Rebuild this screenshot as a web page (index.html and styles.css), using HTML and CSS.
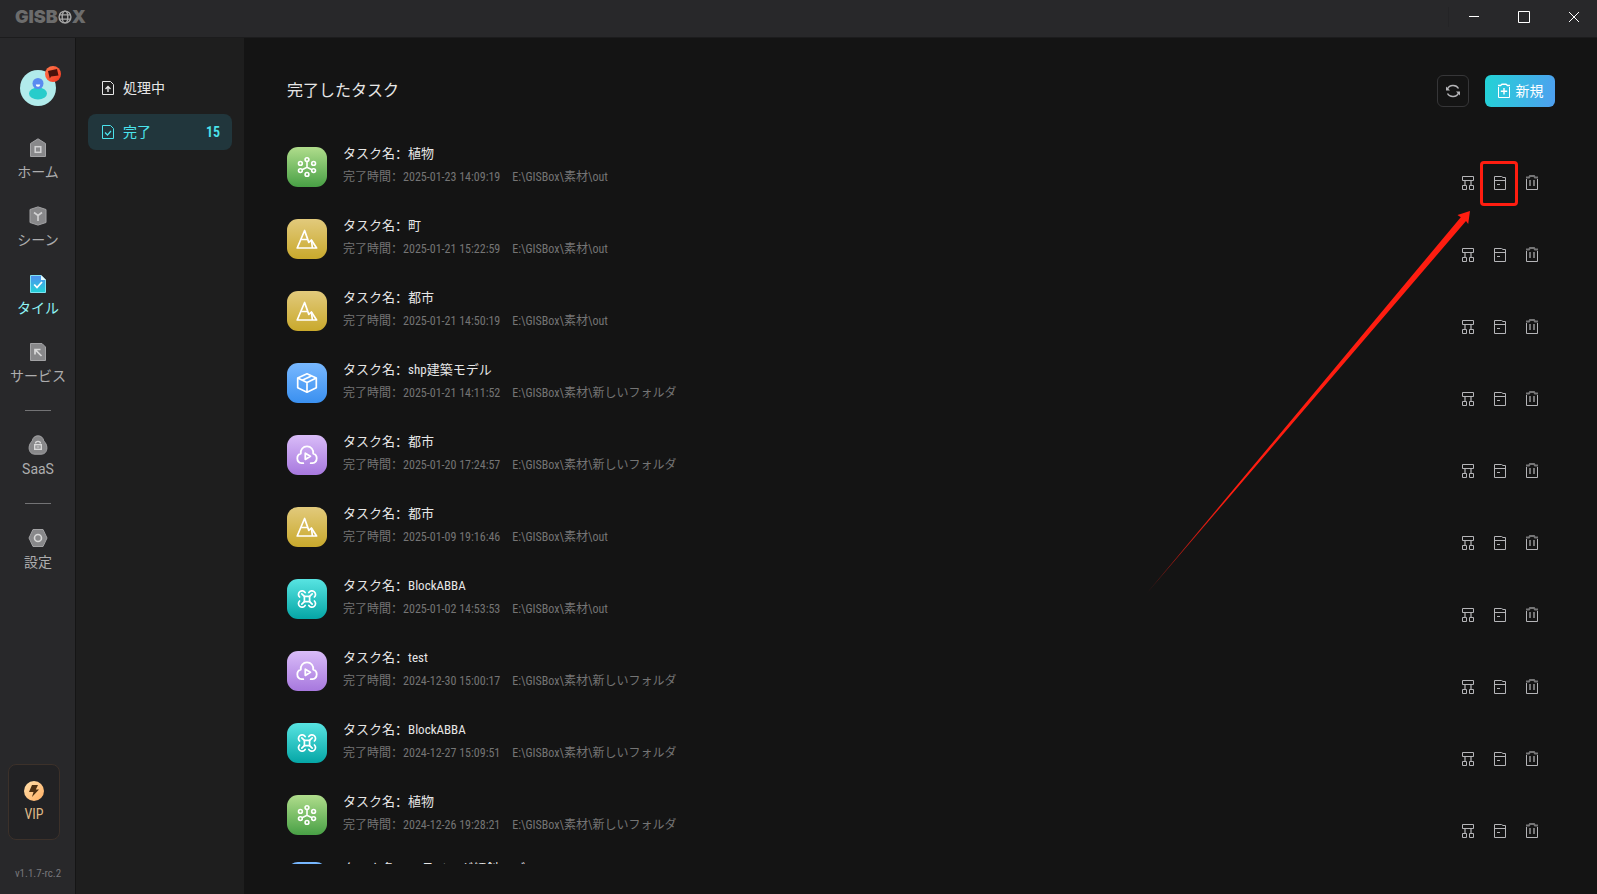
FILE: index.html
```html
<!DOCTYPE html>
<html lang="ja">
<head>
<meta charset="utf-8">
<title>GISBox</title>
<link rel="stylesheet" href="styles.css">
</head>
<body>
<svg class="defs" width="0" height="0" aria-hidden="true">
  <defs>
    <linearGradient id="g-tile" x1="0" y1="0" x2="0" y2="1"><stop offset="0" stop-color="#4f8ff0"/><stop offset="1" stop-color="#22d3d6"/></linearGradient>
    <linearGradient id="g-vip" x1="0" y1="0" x2="1" y2="1"><stop offset="0" stop-color="#ffe0ac"/><stop offset="1" stop-color="#ffae62"/></linearGradient>
    <linearGradient id="g-flag" x1="0" y1="0" x2="1" y2="1"><stop offset="0" stop-color="#ff7a4d"/><stop offset="1" stop-color="#f5351f"/></linearGradient>
    <linearGradient id="g-arrow" gradientUnits="userSpaceOnUse" x1="8" y1="432" x2="90" y2="334"><stop offset="0" stop-color="#ff1d10" stop-opacity=".5"/><stop offset="1" stop-color="#ff1d10"/></linearGradient>
  </defs>
  <symbol id="i-plant" viewBox="0 0 40 40">
    <g fill="none" stroke="#fff" stroke-width="1.6"><circle cx="20" cy="12.6" r="1.9"/><circle cx="13.4" cy="16.4" r="1.9"/><circle cx="26.6" cy="16.4" r="1.9"/><circle cx="13.4" cy="23.6" r="1.9"/><circle cx="26.6" cy="23.6" r="1.9"/><circle cx="20" cy="27.4" r="1.9"/><path d="M20 14.5V20.3M15 22.7L20 20.3L25 22.7"/></g>
  </symbol>
  <symbol id="i-mountain" viewBox="0 0 40 40">
    <g fill="none" stroke="#fff" stroke-width="1.7" stroke-linejoin="round"><path d="M17.6 11.5L10.2 29H29.6L24.4 21L21.8 23.4Z"/><path d="M14.2 20.5H21M24.4 21L25.4 29"/></g>
  </symbol>
  <symbol id="i-box" viewBox="0 0 40 40">
    <g fill="none" stroke="#fff" stroke-width="1.7" stroke-linejoin="round"><path d="M20 10.8L29.3 15V24.8L20 29.2L10.7 24.8V15Z"/><path d="M10.7 15L20 19.4L29.3 15M20 19.4V29.2M15.2 17.2L24.4 12.9"/></g>
  </symbol>
  <symbol id="i-cloud" viewBox="0 0 40 40">
    <g fill="none" stroke="#fff" stroke-width="1.8" stroke-linecap="round" stroke-linejoin="round"><path d="M16.3 28.2H14.6C12 27.8 10.3 25.8 10.3 23.2C10.3 21 11.8 19.2 13.8 18.6C13.3 14.6 16 11.4 20 11.4S26.7 14.6 26.2 18.6C28.2 19.2 29.7 21 29.7 23.2C29.7 25.8 28 27.8 25.4 28.2H23.7"/><path d="M18.3 18.2L23.4 21.3L18.3 24.4Z"/></g>
  </symbol>
  <symbol id="i-drone" viewBox="0 0 40 40">
    <g fill="none" stroke="#fff" stroke-width="1.7" stroke-linecap="round"><rect x="17.4" y="17.4" width="5.2" height="5.2"/><path d="M17.4 17.4L14.8 14.8M22.6 17.4L25.2 14.8M17.4 22.6L14.8 25.2M22.6 22.6L25.2 25.2"/><path d="M12.6 18A3.6 3.6 0 1 1 18.2 13.6M27.4 18A3.6 3.6 0 1 0 21.8 13.6M12.6 22A3.6 3.6 0 1 0 18.2 26.4M27.4 22A3.6 3.6 0 1 1 21.8 26.4"/></g>
  </symbol>
  <symbol id="i-tree" viewBox="0 0 16 16">
    <g fill="none" stroke="currentColor"><path d="M2.5 1.5H13.5V5.5H2.5ZM2.5 10.5H6.5V14.5H2.5ZM9.5 10.5H13.5V14.5H9.5Z"/><path d="M5 5.5V10.5M11 5.5V10.5" stroke-width="2" opacity=".6"/></g>
  </symbol>
  <symbol id="i-folder" viewBox="0 0 16 16">
    <path d="M2.5 1.5H9.5L11 2.5H13.5V14.5H2.5ZM2.5 5.5H13.5M5 9.5H8" fill="none" stroke="currentColor"/>
  </symbol>
  <symbol id="i-trash" viewBox="0 0 16 16">
    <g fill="none" stroke="currentColor"><path d="M2.5 4V14.5H13.5V4"/><path d="M2 2.5H5L6 1H10L11 2.5H14M6 5V11M10 5V11" stroke-width="2" opacity=".6"/></g>
  </symbol>
</svg>

<div class="app">
  <header class="titlebar">
    <div class="logo" aria-label="GISBOX"><span>GISB</span><svg width="14" height="14" viewBox="0 0 13 13"><g fill="none" stroke="#a5a5a5" stroke-width="1.3"><circle cx="6.5" cy="6.5" r="5.5"/><ellipse cx="6.5" cy="6.5" rx="2.6" ry="5.5"/><path d="M1.5 4.5H11.5M1.5 8.5H11.5"/></g></svg><span>X</span></div>
    <div class="window-controls">
      <button type="button" aria-label="最小化"><svg width="14" height="14" viewBox="0 0 14 14"><path d="M2 6.5H12"/></svg></button>
      <button type="button" aria-label="最大化"><svg width="14" height="14" viewBox="0 0 14 14"><path d="M1.5 1.5H12.5V12.5H1.5Z"/></svg></button>
      <button type="button" aria-label="閉じる"><svg width="14" height="14" viewBox="0 0 14 14"><path d="M2 2L12 12M12 2L2 12"/></svg></button>
    </div>
  </header>

  <div class="body">
    <nav class="rail">
      <button type="button" class="avatar" aria-label="アカウント">
        <svg width="36" height="36" viewBox="0 0 36 36"><circle cx="18" cy="18" r="18" fill="#b1ebeb"/><ellipse cx="18" cy="23.5" rx="9" ry="6" fill="#27cccb"/><circle cx="18" cy="13.5" r="5.5" fill="#5a8bf0"/><path d="M15.8 14.5H20.2A2.2 2.2 0 0 1 15.8 14.5Z" fill="#fff"/></svg>
        <svg class="avatar-badge" width="16" height="16" viewBox="0 0 16 16"><circle cx="8" cy="8" r="8" fill="url(#g-flag)"/><path d="M3 5L12 3L13.5 9.5L6 10.5L4.8 12.5Z" fill="#4a120c"/></svg>
      </button>
      <a class="rail-item" href="#"><svg width="20" height="20" viewBox="0 0 20 20"><path d="M2.5 5.5L10 .8L17.5 5.5V18.5H2.5Z" fill="#88888a" stroke="#a3a3a5"/><rect x="7.2" y="8.7" width="5.6" height="5.6" fill="none" stroke="#d2d2d3" stroke-width="1.5"/></svg>ホーム</a>
      <a class="rail-item" href="#"><svg width="20" height="20" viewBox="0 0 20 20"><path d="M2 3.5L10 .9L18 3.5V16.5L10 19.1L2 16.5Z" fill="#88888a" stroke="#a3a3a5"/><path d="M6 6.5L10 9.5L14 6.5M10 9.5V15" fill="none" stroke="#d2d2d3" stroke-width="1.6"/></svg>シーン</a>
      <a class="rail-item is-active" href="#"><svg width="20" height="20" viewBox="0 0 20 20"><path d="M2.5 1.5H13L17.5 6V18.5H2.5Z" fill="url(#g-tile)" stroke="#7fe3f2"/><path d="M13 1V6H18Z" fill="#e3fbff"/><path d="M6.2 10.5L9 13.5L14 8" fill="none" stroke="#fff" stroke-width="1.8"/></svg>タイル</a>
      <a class="rail-item" href="#"><svg width="20" height="20" viewBox="0 0 20 20"><path d="M2.5 1.5H14L17.5 5V18.5H2.5Z" fill="#88888a" stroke="#a3a3a5"/><path d="M7 12.5V7.5H12.5M7.2 7.7L13.5 14" fill="none" stroke="#d8d8d8" stroke-width="1.7"/></svg>サービス</a>
      <hr>
      <a class="rail-item" href="#"><svg width="20" height="20" viewBox="0 0 20 20"><path d="M10 .8C13 .8 15.2 2.6 15.8 6C17.6 7.8 18.9 10 18.9 12.8C18.9 16.6 16.8 19.2 13 19.2H7C3.2 19.2 1.1 16.6 1.1 12.8C1.1 10 2.4 7.8 4.2 6C4.8 2.6 7 .8 10 .8Z" fill="#88888a" stroke="#a3a3a5"/><path d="M7.5 8.5A2.5 2.2 0 0 1 12.5 8.5" fill="none" stroke="#d8d8d8" stroke-width="1.3"/><rect x="6.7" y="9.7" width="6.6" height="4.6" fill="none" stroke="#d8d8d8" stroke-width="1.4"/><path d="M8.5 12H11.5" stroke="#d8d8d8"/></svg>SaaS</a>
      <hr>
      <a class="rail-item" href="#"><svg width="20" height="20" viewBox="0 0 20 20"><path d="M5 1.5H15L19 10L15 18.5H5L1 10Z" fill="#88888a" stroke="#a3a3a5"/><circle cx="10" cy="10" r="3.5" fill="none" stroke="#d8d8d8" stroke-width="1.6"/></svg>設定</a>
      <button type="button" class="vip"><svg width="20" height="20" viewBox="0 0 20 20"><circle cx="10" cy="10" r="10" fill="url(#g-vip)"/><path d="M8 4H14L11.8 8.5H15L8 16L9.5 11H5Z" fill="#4c2f12"/></svg>VIP</button>
      <span class="version">v1.1.7-rc.2</span>
    </nav>

    <nav class="side">
      <a class="side-item" href="#"><svg width="14" height="16" viewBox="0 0 14 16"><path d="M1.5 1.5H9.5L12.5 4.5V14.5H1.5Z" fill="none" stroke="currentColor"/><path d="M7 12V7.5M4.5 9L7 6.5L9.5 9" fill="none" stroke="currentColor" stroke-width="1.4"/></svg><span>処理中</span></a>
      <a class="side-item is-active" href="#"><svg width="14" height="16" viewBox="0 0 14 16"><path d="M1.5 1.5H9.5L12.5 4.5V14.5H1.5Z" fill="none" stroke="currentColor"/><path d="M4 8.5L6.5 11L10 7" fill="none" stroke="currentColor" stroke-width="1.2"/></svg><span>完了</span><b>15</b></a>
    </nav>

    <main class="main">
      <div class="main-head">
        <h1>完了したタスク</h1>
        <button type="button" class="refresh" aria-label="更新"><svg width="16" height="16" viewBox="0 0 16 16"><g fill="none" stroke="#b5b5b8" stroke-width="1.4"><path d="M2.5 6A6 5.5 0 0 1 13.5 5.5M13.5 10A6 5.5 0 0 1 2.5 10.5"/></g><path d="M1 3.5V7.5H5ZM15 12.5V8.5H11Z" fill="#b5b5b8"/></svg></button>
        <button type="button" class="new"><svg width="14" height="16" viewBox="0 0 14 16"><g fill="none" stroke="#fff"><path d="M1.5 4V14.5H12.5V4"/><path d="M1 2.5H3.5L5 1.3H9L10.5 2.5H13M7 5V11.5M3.8 8.2H10.2" stroke-width="1.4"/></g></svg>新規</button>
      </div>
      <ul class="tasks" id="tasks"></ul>
      <div class="callout" aria-hidden="true"></div>
      <svg class="pointer" width="380" height="440" viewBox="0 0 380 440" aria-hidden="true"><path d="M330 51L317.5 55L320.8 57.2L7 433L326 61L328.2 64Z" fill="url(#g-arrow)"/></svg>
    </main>
  </div>
</div>
<script src="app.js"></script>
</body>
</html>
```
FILE: styles.css
```css
* { box-sizing: border-box; }

body {
  margin: 0;
  background: #141414;
  color: #e6e6e6;
  font: 14px/20px "Roboto Condensed", "Liberation Sans Narrow", "Noto Sans CJK SC", sans-serif;
}

button { border: 0; padding: 0; background: none; color: inherit; font: inherit; }
a { color: inherit; text-decoration: none; }
.defs { position: absolute; }
svg { display: block; flex: none; }

.app { display: flex; flex-direction: column; height: 100vh; overflow: hidden; }

.titlebar {
  display: flex;
  align-items: center;
  justify-content: space-between;
  height: 38px;
  padding: 0 0 3px 15px;
  background: #28282a;
  border-bottom: 1px solid #1c1c1d;
}
.logo { display: flex; align-items: center; color: #6c6c6c; font: 900 18px/20px Inter, sans-serif; }
.window-controls { display: flex; gap: 4px; padding-left: 2px; border-left: 1px solid #242426; }
.window-controls button { display: grid; place-items: center; width: 46px; height: 20px; }
.window-controls path { fill: none; stroke: #fff; }

.body { display: flex; flex: 1; min-height: 0; }

.rail {
  display: flex;
  flex-direction: column;
  align-items: center;
  gap: 24px;
  width: 76px;
  padding: 32px 0 10px 1px;
  background: #28282a;
  border-right: 1px solid #151515;
}
.avatar { position: relative; margin-bottom: 8px; }
.avatar-badge { position: absolute; top: -4px; right: -5px; }
.rail-item {
  display: flex;
  flex-direction: column;
  align-items: center;
  gap: 4px;
  color: #adadae;
  font-family: Roboto, "Noto Sans CJK SC", sans-serif;
}
.rail-item.is-active { color: #8ff5f7; }
.rail hr { width: 26px; height: 1px; margin: 0; border: 0; background: #737375; }
.vip {
  display: flex;
  flex-direction: column;
  align-items: center;
  justify-content: center;
  gap: 3px;
  width: 52px;
  height: 76px;
  margin: auto auto 0 7px;
  border: 1px solid #3c312a;
  border-radius: 8px;
  background: #222224;
  color: #deb887;
}
.version { color: #77777b; font-size: 11px; }

.side {
  display: flex;
  flex-direction: column;
  gap: 8px;
  width: 168px;
  padding: 32px 12px;
  background: #1e1e1e;
}
.side-item { display: flex; align-items: center; gap: 8px; height: 36px; padding: 0 12px 0 13px; border-radius: 8px; }
.side-item.is-active { background: #21363c; color: #4be3ec; }
.side-item b { margin-left: auto; font-weight: 600; }

.main {
  position: relative;
  display: flex;
  flex: 1;
  flex-direction: column;
  gap: 36px;
  min-width: 0;
  padding: 37px 42px 30px 43px;
}
.main-head { display: flex; align-items: center; gap: 16px; }
.main-head h1 { margin: 0 auto 0 0; font-size: 16px; font-weight: 400; }
.refresh { display: grid; place-items: center; width: 32px; height: 32px; border: 1px solid #363638; border-radius: 6px; }
.new {
  display: flex;
  align-items: center;
  justify-content: center;
  gap: 5px;
  width: 70px;
  height: 32px;
  border-radius: 6px;
  background: linear-gradient(100deg, #22d3d6, #4f9ff0);
  color: #fff;
}

.tasks {
  display: flex;
  flex: 1;
  flex-direction: column;
  gap: 24px;
  min-height: 0;
  margin: 0;
  padding: 0;
  overflow: hidden;
  list-style: none;
}
.task { display: flex; flex: none; align-items: center; gap: 16px; height: 48px; }
.task:last-child { margin-top: -5px; }
.task-icon { width: 40px; height: 40px; border-radius: 11px; }
.plant { background: linear-gradient(#b0dd8c, #48a045); }
.mountain { background: linear-gradient(#e2ca7c, #c9a92c); }
.box { background: linear-gradient(#78b8ff, #3a90f0); }
.cloud { background: linear-gradient(#d9bcf8, #a778de); }
.drone { background: linear-gradient(#58e4e2, #05a6a6); }
.task-text { display: flex; flex: 1; flex-direction: column; gap: 3px; align-self: flex-start; padding-top: 1px; }
.task-name { font-size: 13px; }
.task-meta { display: flex; gap: 12px; color: #757575; font-size: 12px; }
.task-actions { display: flex; gap: 16px; align-self: flex-end; padding-right: 15px; color: #b5b5b8; }

.callout {
  position: absolute;
  top: 123px;
  right: 79px;
  width: 38px;
  height: 45px;
  border: 3px solid #ff1d10;
  border-radius: 4px;
  pointer-events: none;
}
.pointer { position: absolute; top: 122px; right: 77px; pointer-events: none; }
```
FILE: app.js
```js
const tasks = [
  ["plant", "植物", "2025-01-23 14:09:19", "out"],
  ["mountain", "町", "2025-01-21 15:22:59", "out"],
  ["mountain", "都市", "2025-01-21 14:50:19", "out"],
  ["box", "shp建築モデル", "2025-01-21 14:11:52", "新しいフォルダ"],
  ["cloud", "都市", "2025-01-20 17:24:57", "新しいフォルダ"],
  ["mountain", "都市", "2025-01-09 19:16:46", "out"],
  ["drone", "BlockABBA", "2025-01-02 14:53:53", "out"],
  ["cloud", "test", "2024-12-30 15:00:17", "新しいフォルダ"],
  ["drone", "BlockABBA", "2024-12-27 15:09:51", "新しいフォルダ"],
  ["plant", "植物", "2024-12-26 19:28:21", "新しいフォルダ"],
  ["box", "フライング傾斜モデル"],
];

const action = (icon, label) =>
  `<button type="button" aria-label="${label}"><svg width="16" height="16"><use href="#i-${icon}"/></svg></button>`;

const colon = '<span lang="zh-Hans">：</span>';

const meta = (time, dir) =>
  `<span class="task-meta"><span>完了時間${colon}${time}</span><span>E:\\GISBox\\素材\\${dir}</span></span>`;

document.getElementById("tasks").innerHTML = tasks.map(([kind, name, time, dir]) => `
  <li class="task">
    <svg class="task-icon ${kind}"><use href="#i-${kind}"/></svg>
    <div class="task-text">
      <span class="task-name">タスク名${colon}${name}</span>
      ${time ? meta(time, dir) : ""}
    </div>
    <div class="task-actions">${action("tree", "階層")}${action("folder", "フォルダを開く")}${action("trash", "削除")}</div>
  </li>`).join("");
```
